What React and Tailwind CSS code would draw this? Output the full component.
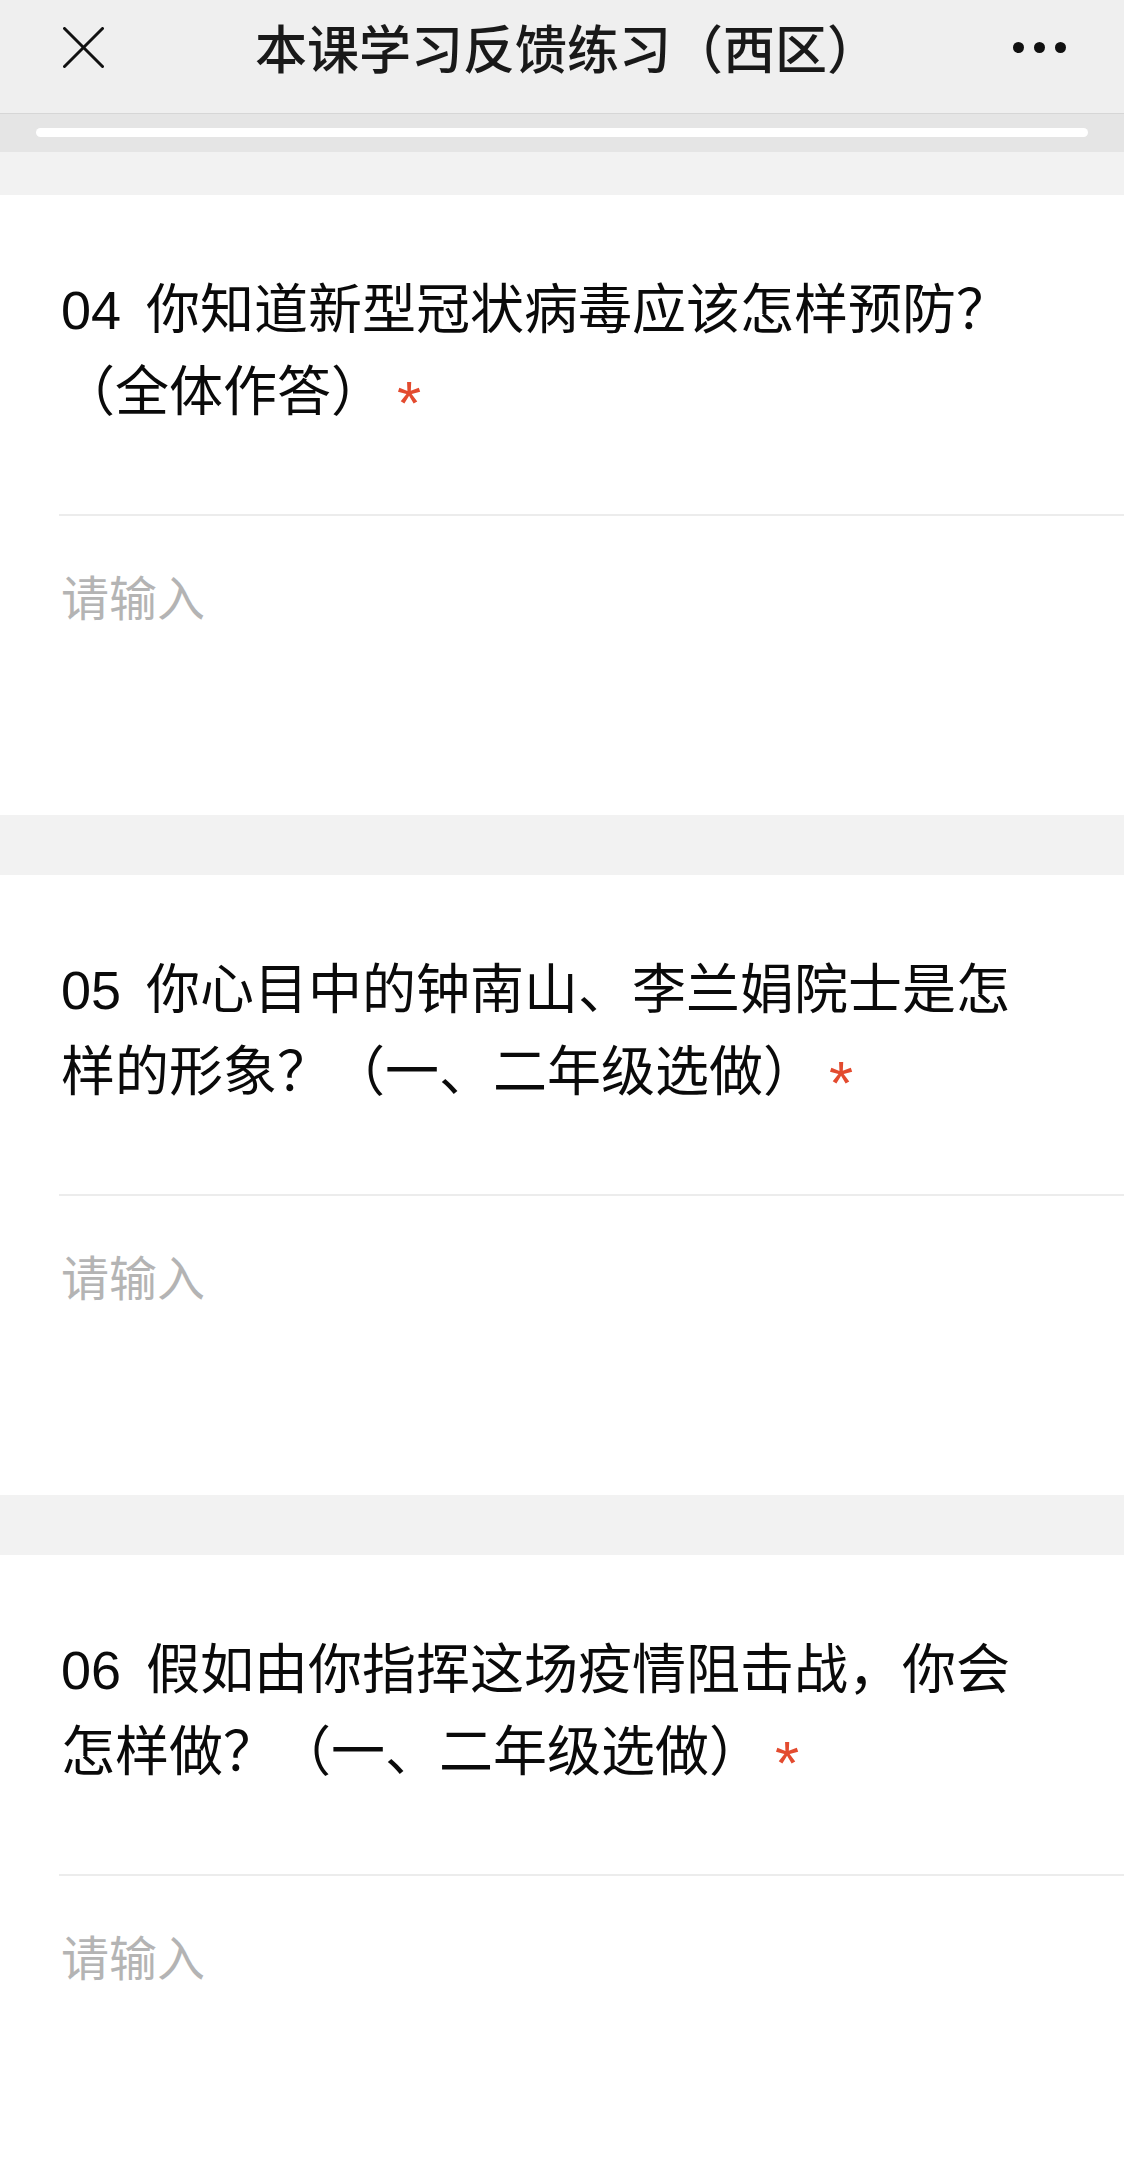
import React from "react";

const FONT = { fontFamily: '"Liberation Sans", "Noto Sans CJK SC", sans-serif' };

function Asterisk() {
  return (
    <span className="relative top-[13px] ml-[12px] text-[62px] text-[#e34b2f]" style={FONT}>
      *
    </span>
  );
}

function Question({ num, lines }) {
  return (
    <div className="bg-white">
      <div className="pl-[61px] pr-[40px] pt-[75px] pb-[82px]">
        <p className="text-[54px] leading-[80px] text-[#0a0a0a] whitespace-nowrap" style={FONT}>
          {lines.map((ln, i) => (
            <span key={i} className="block">
              {i === 0 && <span className="mr-[25px]">{num}</span>}
              {ln}
              {i === lines.length - 1 && <Asterisk />}
            </span>
          ))}
        </p>
      </div>
      <div className="ml-[59px] h-[2px] bg-[#ececec]" />
      <div className="h-[299px] pl-[61px] pr-[60px] pt-[48px]">
        <textarea
          className="w-full h-[200px] resize-none bg-transparent outline-none text-[48px] leading-[72px] text-[#111] placeholder:text-[#b4b4b4]"
          style={FONT}
          placeholder="请输入"
        />
      </div>
    </div>
  );
}

export default function App() {
  return (
    <div className="min-h-screen bg-[#f2f2f2]" style={FONT}>
      <div className="h-[114px] pb-[19px] bg-[#efefef] border-b border-[#d6d6d6] grid grid-cols-[1fr_auto_1fr] items-center">
        <div className="pl-[63px] flex items-center">
          <svg width="41" height="41" viewBox="0 0 41 41">
            <line x1="1.5" y1="1.5" x2="39.5" y2="39.5" stroke="#111" strokeWidth="3" strokeLinecap="round" />
            <line x1="39.5" y1="1.5" x2="1.5" y2="39.5" stroke="#111" strokeWidth="3" strokeLinecap="round" />
          </svg>
        </div>
        <div className="pl-[10px] text-[52px] leading-[72px] font-medium text-[#191919] whitespace-nowrap" style={{ fontFamily: '"Noto Sans CJK SC", sans-serif' }}>
          本课学习反馈练习（西区）
        </div>
        <div className="flex justify-end items-center gap-[10px] pr-[58px]">
          <span className="block w-[11px] h-[11px] rounded-full bg-[#111]" />
          <span className="block w-[11px] h-[11px] rounded-full bg-[#111]" />
          <span className="block w-[11px] h-[11px] rounded-full bg-[#111]" />
        </div>
      </div>
      <div className="h-[38px] bg-[#e5e5e5] px-[36px] pt-[14px]">
        <div className="h-[9px] rounded-full bg-white" />
      </div>
      <div className="h-[43px]" />
      <Question num="04" lines={["你知道新型冠状病毒应该怎样预防？", "（全体作答）"]} />
      <div className="h-[60px]" />
      <Question num="05" lines={["你心目中的钟南山、李兰娟院士是怎", "样的形象？（一、二年级选做）"]} />
      <div className="h-[60px]" />
      <Question num="06" lines={["假如由你指挥这场疫情阻击战，你会", "怎样做？（一、二年级选做）"]} />
    </div>
  );
}
